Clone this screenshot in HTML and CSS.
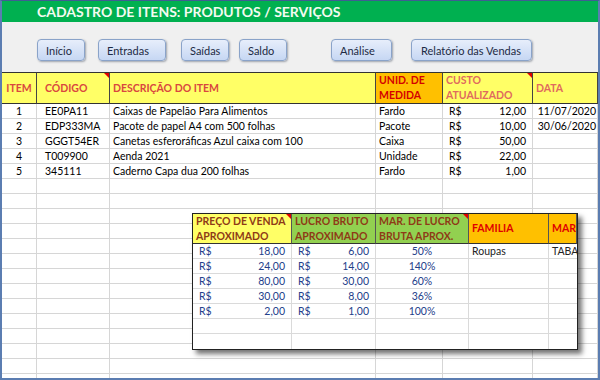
FILE: index.html
```html
<!DOCTYPE html>
<html lang="pt">
<head>
<meta charset="utf-8">
<title>Cadastro de Itens</title>
<link rel="stylesheet" href="styles.css">
</head>
<body>
<div class="window">
  <div class="title">CADASTRO DE ITENS: PRODUTOS / SERVIÇOS</div>
  <div class="toolbar">
    <button class="btn b-inicio">Início</button>
    <button class="btn b-entradas">Entradas</button>
    <button class="btn b-saidas">Saídas</button>
    <button class="btn b-saldo">Saldo</button>
    <button class="btn b-analise">Análise</button>
    <button class="btn b-relatorio">Relatório das Vendas</button>
  </div>
  <div class="sheet">
    <div class="h y c">ITEM</div>
    <div class="h y pad8 mark">CÓDIGO</div>
    <div class="h y">DESCRIÇÃO DO ITEM</div>
    <div class="h o two">UNID. DE<br>MEDIDA</div>
    <div class="h y two soft mark">CUSTO<br>ATUALIZADO</div>
    <div class="h y soft">DATA</div>

    <div class="d c">1</div><div class="d pad8">EE0PA11</div><div class="d">Caixas de Papelão Para Alimentos</div><div class="d">Fardo</div><div class="d money"><span>R$</span><span>12,00</span></div><div class="d r">11/07/2020</div>
    <div class="d c">2</div><div class="d pad8">EDP333MA</div><div class="d">Pacote de papel A4 com 500 folhas</div><div class="d">Pacote</div><div class="d money"><span>R$</span><span>10,00</span></div><div class="d r">30/06/2020</div>
    <div class="d c">3</div><div class="d pad8">GGGT54ER</div><div class="d">Canetas esferoráficas Azul caixa com 100</div><div class="d">Caixa</div><div class="d money"><span>R$</span><span>50,00</span></div><div class="d r"></div>
    <div class="d c">4</div><div class="d pad8">T009900</div><div class="d">Aenda 2021</div><div class="d">Unidade</div><div class="d money"><span>R$</span><span>22,00</span></div><div class="d r"></div>
    <div class="d c">5</div><div class="d pad8">345111</div><div class="d">Caderno Capa dua 200 folhas</div><div class="d">Fardo</div><div class="d money"><span>R$</span><span>1,00</span></div><div class="d r"></div>

    <div class="d"></div><div class="d"></div><div class="d"></div><div class="d"></div><div class="d"></div><div class="d"></div>
    <div class="d"></div><div class="d"></div><div class="d"></div><div class="d"></div><div class="d"></div><div class="d"></div>
    <div class="d"></div><div class="d"></div><div class="d"></div><div class="d"></div><div class="d"></div><div class="d"></div>
    <div class="d"></div><div class="d"></div><div class="d"></div><div class="d"></div><div class="d"></div><div class="d"></div>
    <div class="d"></div><div class="d"></div><div class="d"></div><div class="d"></div><div class="d"></div><div class="d"></div>
    <div class="d"></div><div class="d"></div><div class="d"></div><div class="d"></div><div class="d"></div><div class="d"></div>
    <div class="d"></div><div class="d"></div><div class="d"></div><div class="d"></div><div class="d"></div><div class="d"></div>
    <div class="d"></div><div class="d"></div><div class="d"></div><div class="d"></div><div class="d"></div><div class="d"></div>
    <div class="d"></div><div class="d"></div><div class="d"></div><div class="d"></div><div class="d"></div><div class="d"></div>
    <div class="d"></div><div class="d"></div><div class="d"></div><div class="d"></div><div class="d"></div><div class="d"></div>
    <div class="d"></div><div class="d"></div><div class="d"></div><div class="d"></div><div class="d"></div><div class="d"></div>
    <div class="d"></div><div class="d"></div><div class="d"></div><div class="d"></div><div class="d"></div><div class="d"></div>
    <div class="d"></div><div class="d"></div><div class="d"></div><div class="d"></div><div class="d"></div><div class="d"></div>
    <div class="d"></div><div class="d"></div><div class="d"></div><div class="d"></div><div class="d"></div><div class="d"></div>
  </div>

  <div class="panel">
    <div class="ph y2 two mark">PREÇO DE VENDA<br>APROXIMADO</div>
    <div class="ph g two">LUCRO BRUTO<br>APROXIMADO</div>
    <div class="ph g two mark">MAR. DE LUCRO<br>BRUTA APROX.</div>
    <div class="ph o2">FAMILIA</div>
    <div class="ph o2 clip">MARCA</div>

    <div class="pd money"><span>R$</span><span>18,00</span></div><div class="pd money"><span>R$</span><span>6,00</span></div><div class="pd c">50%</div><div class="pd blk">Roupas</div><div class="pd blk clip">TABACO</div>
    <div class="pd money"><span>R$</span><span>24,00</span></div><div class="pd money"><span>R$</span><span>14,00</span></div><div class="pd c">140%</div><div class="pd"></div><div class="pd"></div>
    <div class="pd money"><span>R$</span><span>80,00</span></div><div class="pd money"><span>R$</span><span>30,00</span></div><div class="pd c">60%</div><div class="pd"></div><div class="pd"></div>
    <div class="pd money"><span>R$</span><span>30,00</span></div><div class="pd money"><span>R$</span><span>8,00</span></div><div class="pd c">36%</div><div class="pd"></div><div class="pd"></div>
    <div class="pd money"><span>R$</span><span>2,00</span></div><div class="pd money"><span>R$</span><span>1,00</span></div><div class="pd c">100%</div><div class="pd"></div><div class="pd"></div>
    <div class="pd"></div><div class="pd"></div><div class="pd"></div><div class="pd"></div><div class="pd"></div>
    <div class="pd last"></div><div class="pd last"></div><div class="pd last"></div><div class="pd last"></div><div class="pd last"></div>
  </div>
</div>
</body>
</html>
```

FILE: styles.css
```css
html, body {
  margin: 0;
  padding: 0;
  background: #ffffff;
}

.window {
  position: relative;
  width: 600px;
  height: 380px;
  box-sizing: border-box;
  border: 2px solid #5b7db1;
  border-top: 1px solid #3f5f92;
  overflow: hidden;
  background: #ffffff;
  font-family: Lato, "Liberation Sans", sans-serif;
}

.title {
  height: 21px;
  line-height: 21px;
  background: #00b050;
  color: #f4fbf0;
  font-size: 14px;
  font-weight: 700;
  padding-left: 35px;
  white-space: nowrap;
}

.toolbar {
  height: 50px;
  box-sizing: border-box;
  background: #f0f0f0;
  padding: 17px 0 0 35px;
  display: flex;
  align-items: flex-start;
}

.btn {
  height: 22px;
  box-sizing: border-box;
  border: 1px solid #8aa3c9;
  border-radius: 4px;
  background: linear-gradient(#e7eefb, #c6d7f3);
  box-shadow: 1px 1px 2px rgba(60, 70, 90, 0.45);
  font-family: Lato, "Liberation Sans", sans-serif;
  font-size: 11px;
  color: #1d2a44;
  text-align: left;
  padding: 0 0 0 8px;
  white-space: nowrap;
}

.b-inicio { width: 48px; }
.b-entradas { width: 68px; margin-left: 13px; }
.b-saidas { width: 48px; margin-left: 15px; }
.b-saldo { width: 48px; margin-left: 10px; }
.b-analise { width: 61px; margin-left: 44px; }
.b-relatorio { width: 121px; margin-left: 19px; padding-left: 9px; }

.sheet {
  display: grid;
  grid-template-columns: 35px 73px 266px 67px 90px 65px;
  grid-template-rows: 32px;
  grid-auto-rows: 15px;
  font-size: 10.5px;
  color: #000;
}

.h {
  position: relative;
  box-sizing: border-box;
  border-top: 1px solid #333;
  border-bottom: 1px solid #333;
  border-right: 1px solid #444;
  font-weight: 700;
  color: #d9473f;
  padding: 0 3px;
  display: flex;
  align-items: center;
  white-space: nowrap;
  line-height: 15px;
}
.h.two { align-items: flex-start; padding-top: 0; }
.h.soft { color: #e06a5e; }
.h.y { background: #ffff66; }
.h.o { background: #ffc000; color: #d40000; }

.mark::after {
  content: "";
  position: absolute;
  top: 0;
  right: 0;
  border-top: 5px solid #e00000;
  border-left: 5px solid transparent;
}

.d {
  box-sizing: border-box;
  border-right: 1px solid #d6d6d6;
  border-bottom: 1px solid #d6d6d6;
  padding: 0 3px;
  line-height: 14px;
  white-space: nowrap;
  overflow: hidden;
}
.c { text-align: center; }
.r { text-align: right; padding-right: 1px; }
.pad8 { padding-left: 8px; }
.h.c { justify-content: center; }

.money {
  display: flex;
  justify-content: space-between;
  padding: 0 6px 0 6px;
}

.panel {
  position: absolute;
  left: 190px;
  top: 212px;
  width: 386px;
  box-sizing: border-box;
  border: 1px solid #222;
  background: #fff;
  box-shadow: 4px 4px 5px rgba(0, 0, 0, 0.55);
  display: grid;
  grid-template-columns: 99px 84px 93px 80px 28px;
  grid-template-rows: 30px;
  grid-auto-rows: 15px;
  font-size: 10.5px;
}

.ph {
  position: relative;
  box-sizing: border-box;
  border-bottom: 1px solid #333;
  border-right: 1px solid #555;
  font-weight: 700;
  color: #8e3a17;
  padding: 0 3px;
  line-height: 15px;
  display: flex;
  align-items: center;
  white-space: nowrap;
  overflow: hidden;
}
.ph:last-child { border-right: 0; }
.ph.two { align-items: flex-start; }
.y2 { background: #ffff66; }
.g { background: #92d050; }
.o2 { background: #ffc000; color: #e00000; }
.clip { overflow: hidden; }

.pd {
  box-sizing: border-box;
  border-right: 1px solid #dadada;
  border-bottom: 1px solid #dadada;
  line-height: 14px;
  padding: 0 3px;
  color: #23408a;
  white-space: nowrap;
  overflow: hidden;
}
.pd:nth-child(5n) { border-right: 0; }
.pd.blk { color: #222; }
.pd.last { border-bottom: 0; }
.pd.money { padding: 0 6px 0 6px; }
```
